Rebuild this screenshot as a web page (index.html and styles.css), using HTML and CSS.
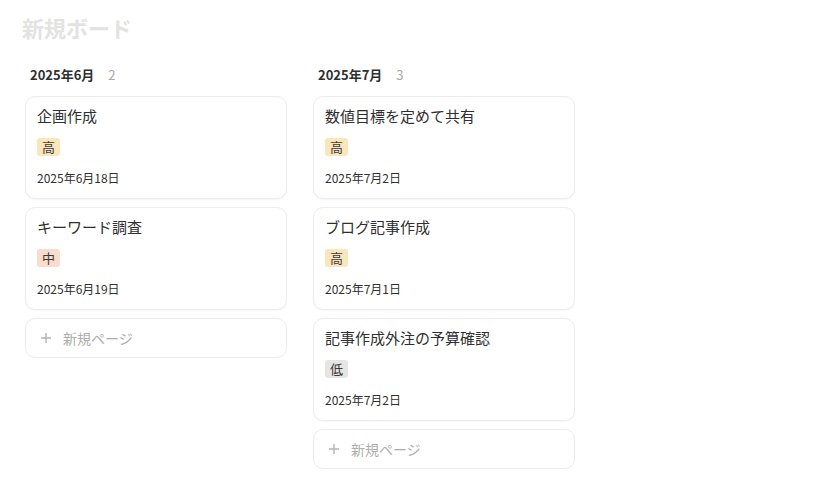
FILE: index.html
```html
<!DOCTYPE html>
<html lang="ja">
<head>
<meta charset="utf-8">
<link rel="stylesheet" href="styles.css">
</head>
<body>
<div class="page">
  <h1 class="board-title">新規ボード</h1>
  <div class="board">
    <section class="column">
      <div class="col-head"><span class="col-name">2025年6月</span><span class="col-count">2</span></div>
      <div class="card">
        <div class="card-title">企画作成</div>
        <div class="tag tag-high">高</div>
        <div class="card-date">2025年6月18日</div>
      </div>
      <div class="card">
        <div class="card-title">キーワード調査</div>
        <div class="tag tag-mid">中</div>
        <div class="card-date">2025年6月19日</div>
      </div>
      <div class="new-page"><span class="plus">
        <svg width="12" height="12" viewBox="0 0 12 12"><path d="M6 1v10M1 6h10" stroke="#b4b4b4" stroke-width="1.4" fill="none"/></svg>
      </span>新規ページ</div>
    </section>
    <section class="column">
      <div class="col-head"><span class="col-name">2025年7月</span><span class="col-count">3</span></div>
      <div class="card">
        <div class="card-title">数値目標を定めて共有</div>
        <div class="tag tag-high">高</div>
        <div class="card-date">2025年7月2日</div>
      </div>
      <div class="card">
        <div class="card-title">ブログ記事作成</div>
        <div class="tag tag-high">高</div>
        <div class="card-date">2025年7月1日</div>
      </div>
      <div class="card">
        <div class="card-title">記事作成外注の予算確認</div>
        <div class="tag tag-low">低</div>
        <div class="card-date">2025年7月2日</div>
      </div>
      <div class="new-page"><span class="plus">
        <svg width="12" height="12" viewBox="0 0 12 12"><path d="M6 1v10M1 6h10" stroke="#b4b4b4" stroke-width="1.4" fill="none"/></svg>
      </span>新規ページ</div>
    </section>
  </div>
</div>
</body>
</html>
```

FILE: styles.css
```css
* { box-sizing: border-box; }
html, body { margin: 0; padding: 0; background: #ffffff; }
body {
  font-family: "Noto Sans CJK JP", "Noto Sans", sans-serif;
  color: #37352f;
}
.page { padding: 12px 0 0 22px; }
.board-title {
  margin: 0;
  font-size: 22px;
  line-height: 30px;
  font-weight: 700;
  color: #e3e3e2;
}
.board {
  display: flex;
  gap: 26px;
  margin-top: 22px;
  padding-left: 3px;
}
.column {
  width: 262px;
  display: flex;
  flex-direction: column;
  gap: 8px;
}
.col-head {
  display: flex;
  align-items: center;
  height: 20px;
  padding-left: 5px;
  margin-bottom: 4px;
  gap: 14px;
}
.col-name { font-size: 13px; font-weight: 700; color: #2f2f2f; }
.col-count { font-size: 13px; color: #a8a8a6; }
.card {
  background: #fff;
  border: 1px solid #ececeb;
  border-radius: 10px;
  box-shadow: 0 1px 2px rgba(15,15,15,0.04);
  padding: 9px 11px 12px;
  display: flex;
  flex-direction: column;
  align-items: flex-start;
}
.card-title {
  font-size: 15px;
  line-height: 20px;
  color: #2f2f2f;
}
.tag {
  margin-top: 12px;
  height: 18px;
  line-height: 18px;
  padding: 0 5px;
  font-size: 13px;
  border-radius: 3px;
  color: #3a3a3a;
}
.tag-high { background: #fbe6bc; }
.tag-mid { background: #f9dccb; }
.tag-low { background: #e6e5e3; }
.card-date {
  margin-top: 14px;
  font-size: 12px;
  line-height: 16px;
  color: #2f2f2f;
}
.new-page {
  height: 40px;
  border: 1px solid #ececeb;
  border-radius: 10px;
  display: flex;
  align-items: center;
  padding-left: 14px;
  font-size: 14px;
  color: #aeaeac;
}
.plus { display: flex; align-items: center; margin-right: 11px; }
```
